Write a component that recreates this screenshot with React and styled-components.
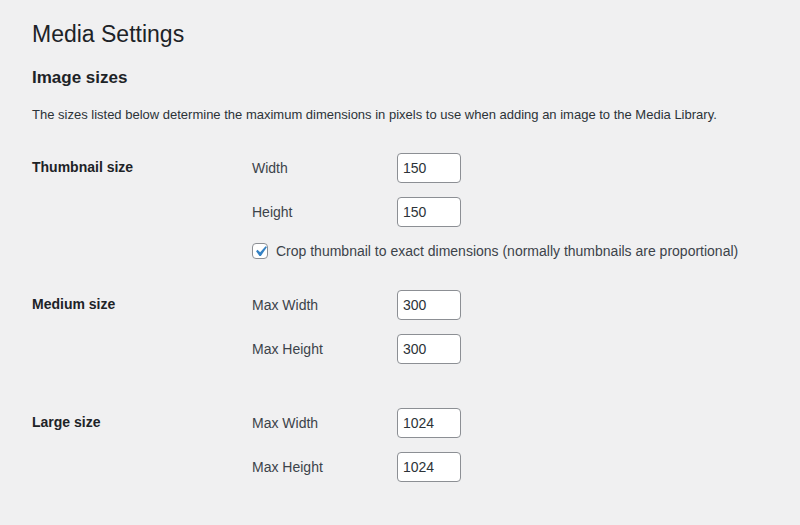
import React from "react";
import styled, { createGlobalStyle } from "styled-components";

const GlobalStyle = createGlobalStyle`
  html, body {
    margin: 0;
    padding: 0;
    background: #f0f0f1;
  }
  body {
    font-family: "Liberation Sans", Arial, sans-serif;
    color: #1d2327;
    font-size: 13px;
  }
`;

//Styles
const Page = styled.div`
  padding: 19px 32px 40px;
  min-height: 100vh;
  box-sizing: border-box;
`;

const Title = styled.h1`
  margin: 0;
  font-size: 23px;
  font-weight: 400;
  line-height: 30px;
  color: #1d2327;
`;

const SectionTitle = styled.h2`
  margin: 18px 0 0;
  font-size: 17px;
  font-weight: 700;
  line-height: 22px;
  color: #1d2327;
`;

const Description = styled.p`
  margin: 16px 0 0;
  font-size: 13px;
  line-height: 20px;
  color: #2c3338;
`;

const SizeRow = styled.div`
  display: flex;
  margin-top: ${props => props.gap}px;
`;

const SizeName = styled.div`
  width: 220px;
  flex-shrink: 0;
  padding-top: 4px;
  font-size: 14px;
  font-weight: 700;
  line-height: 20px;
  color: #1d2327;
`;

const Fields = styled.div`
  display: flex;
  flex-direction: column;
  gap: 14px;
`;

const Field = styled.div`
  display: flex;
  align-items: center;
  height: 30px;
`;

const FieldLabel = styled.label`
  width: 145px;
  font-size: 14px;
  color: #3c434a;
`;

const NumberInput = styled.input`
  width: 64px;
  height: 30px;
  box-sizing: border-box;
  padding: 0 5px;
  border: 1px solid #8c8f94;
  border-radius: 4px;
  background: #fff;
  font-family: "Liberation Sans", Arial, sans-serif;
  font-size: 14px;
  color: #2c3338;
  outline: none;
`;

const CheckRow = styled.label`
  display: flex;
  align-items: center;
  gap: 8px;
  margin-top: 2px;
  height: 16px;
  font-size: 14px;
  color: #3c434a;
`;

const CheckBox = styled.span`
  width: 16px;
  height: 16px;
  box-sizing: border-box;
  border: 1px solid #8c8f94;
  border-radius: 4px;
  background: #fff;
  display: flex;
  align-items: center;
  justify-content: center;
  overflow: visible;

  svg {
    flex-shrink: 0;
  }
`;

const Check = () => (
  <svg width="21" height="21" viewBox="0 0 20 20">
    <path
      d="M14.83 4.89l1.34.94-5.81 8.38H9.02L5.78 9.67l1.34-1.25 2.57 2.4z"
      fill="#3582c4"
    />
  </svg>
);

const sizes = [
  {
    name: "Thumbnail size",
    gap: 28,
    fields: [
      ["Width", "150"],
      ["Height", "150"],
    ],
    crop: true,
  },
  {
    name: "Medium size",
    gap: 31,
    fields: [
      ["Max Width", "300"],
      ["Max Height", "300"],
    ],
  },
  {
    name: "Large size",
    gap: 44,
    fields: [
      ["Max Width", "1024"],
      ["Max Height", "1024"],
    ],
  },
];

//Render
const App = () => (
  <>
    <GlobalStyle />
    <Page>
      <Title>Media Settings</Title>
      <SectionTitle>Image sizes</SectionTitle>
      <Description>
        The sizes listed below determine the maximum dimensions in pixels to
        use when adding an image to the Media Library.
      </Description>
      {sizes.map(size => (
        <SizeRow key={size.name} gap={size.gap}>
          <SizeName>{size.name}</SizeName>
          <Fields>
            {size.fields.map(([label, value]) => (
              <Field key={label}>
                <FieldLabel>{label}</FieldLabel>
                <NumberInput type="text" defaultValue={value} />
              </Field>
            ))}
            {size.crop && (
              <CheckRow>
                <CheckBox>
                  <Check />
                </CheckBox>
                Crop thumbnail to exact dimensions (normally thumbnails are
                proportional)
              </CheckRow>
            )}
          </Fields>
        </SizeRow>
      ))}
    </Page>
  </>
);

export default App;
